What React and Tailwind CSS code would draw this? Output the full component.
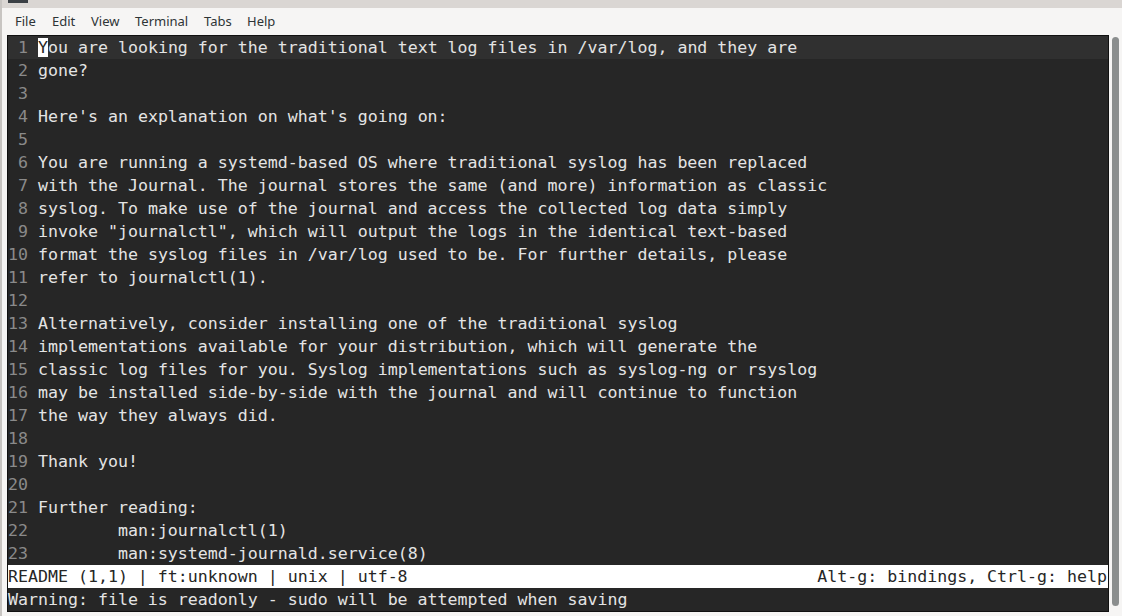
import React from "react";

const lines = [
  "You are looking for the traditional text log files in /var/log, and they are",
  "gone?",
  "",
  "Here's an explanation on what's going on:",
  "",
  "You are running a systemd-based OS where traditional syslog has been replaced",
  "with the Journal. The journal stores the same (and more) information as classic",
  "syslog. To make use of the journal and access the collected log data simply",
  "invoke \"journalctl\", which will output the logs in the identical text-based",
  "format the syslog files in /var/log used to be. For further details, please",
  "refer to journalctl(1).",
  "",
  "Alternatively, consider installing one of the traditional syslog",
  "implementations available for your distribution, which will generate the",
  "classic log files for you. Syslog implementations such as syslog-ng or rsyslog",
  "may be installed side-by-side with the journal and will continue to function",
  "the way they always did.",
  "",
  "Thank you!",
  "",
  "Further reading:",
  "        man:journalctl(1)",
  "        man:systemd-journald.service(8)",
];

const mono = { fontFamily: '"DejaVu Sans Mono", monospace' };

export default function App() {
  return (
    <div
      className="w-[1122px] h-[616px] bg-[#f6f5f4] flex flex-col overflow-hidden border-l-2 border-[#c8c5c2]"
      style={{ fontFamily: '"Noto Sans", sans-serif' }}
    >
      <div className="h-[8px] bg-[#dad6d3] shrink-0 flex">
        <div className="ml-[6px] w-[20px] h-[3px] bg-[#3b4045]" />
      </div>
      <div className="h-[27px] shrink-0 flex items-center pl-[13px] pt-[1px] text-[13px] text-[#2e3436]">
        <span className="w-[37px]">File</span>
        <span className="w-[39px]">Edit</span>
        <span className="w-[44px]">View</span>
        <span className="w-[69px]">Terminal</span>
        <span className="w-[43px]">Tabs</span>
        <span>Help</span>
      </div>
      <div className="flex flex-1 min-h-0">
        <div
          className="ml-[5px] w-[1102px] h-[577px] border border-[#111111] bg-[#262626] flex flex-col text-[16.6px] leading-[22px]"
          style={mono}
        >
          {lines.map((t, i) => (
            <div
              key={i}
              className={`h-[23px] pt-[1px] flex whitespace-pre ${i === 0 ? "bg-[#303030]" : ""}`}
            >
              <span className="w-[30px] text-[#8a8a8a] shrink-0">
                {String(i + 1).padStart(2, " ")}
              </span>
              {i === 0 ? (
                <span className="text-[#e4e4e4]">
                  <span className="bg-[#ffffff] text-[#262626]">Y</span>
                  {t.slice(1)}
                </span>
              ) : (
                <span className="text-[#e4e4e4]">{t}</span>
              )}
            </div>
          ))}
          <div className="h-[23px] pt-[1px] bg-white text-[#262626] flex justify-between whitespace-pre pr-[1px]">
            <span>README (1,1) | ft:unknown | unix | utf-8</span>
            <span>Alt-g: bindings, Ctrl-g: help</span>
          </div>
          <div className="h-[23px] pt-[1px] text-[#e4e4e4] whitespace-pre">
            Warning: file is readonly - sudo will be attempted when saving
          </div>
        </div>
        <div className="ml-[3px] w-[8px] pt-[2px] pb-[6px] h-[577px] flex">
          <div className="w-[7px] h-full rounded-full bg-[#8b8e8e]" />
        </div>
      </div>
    </div>
  );
}
